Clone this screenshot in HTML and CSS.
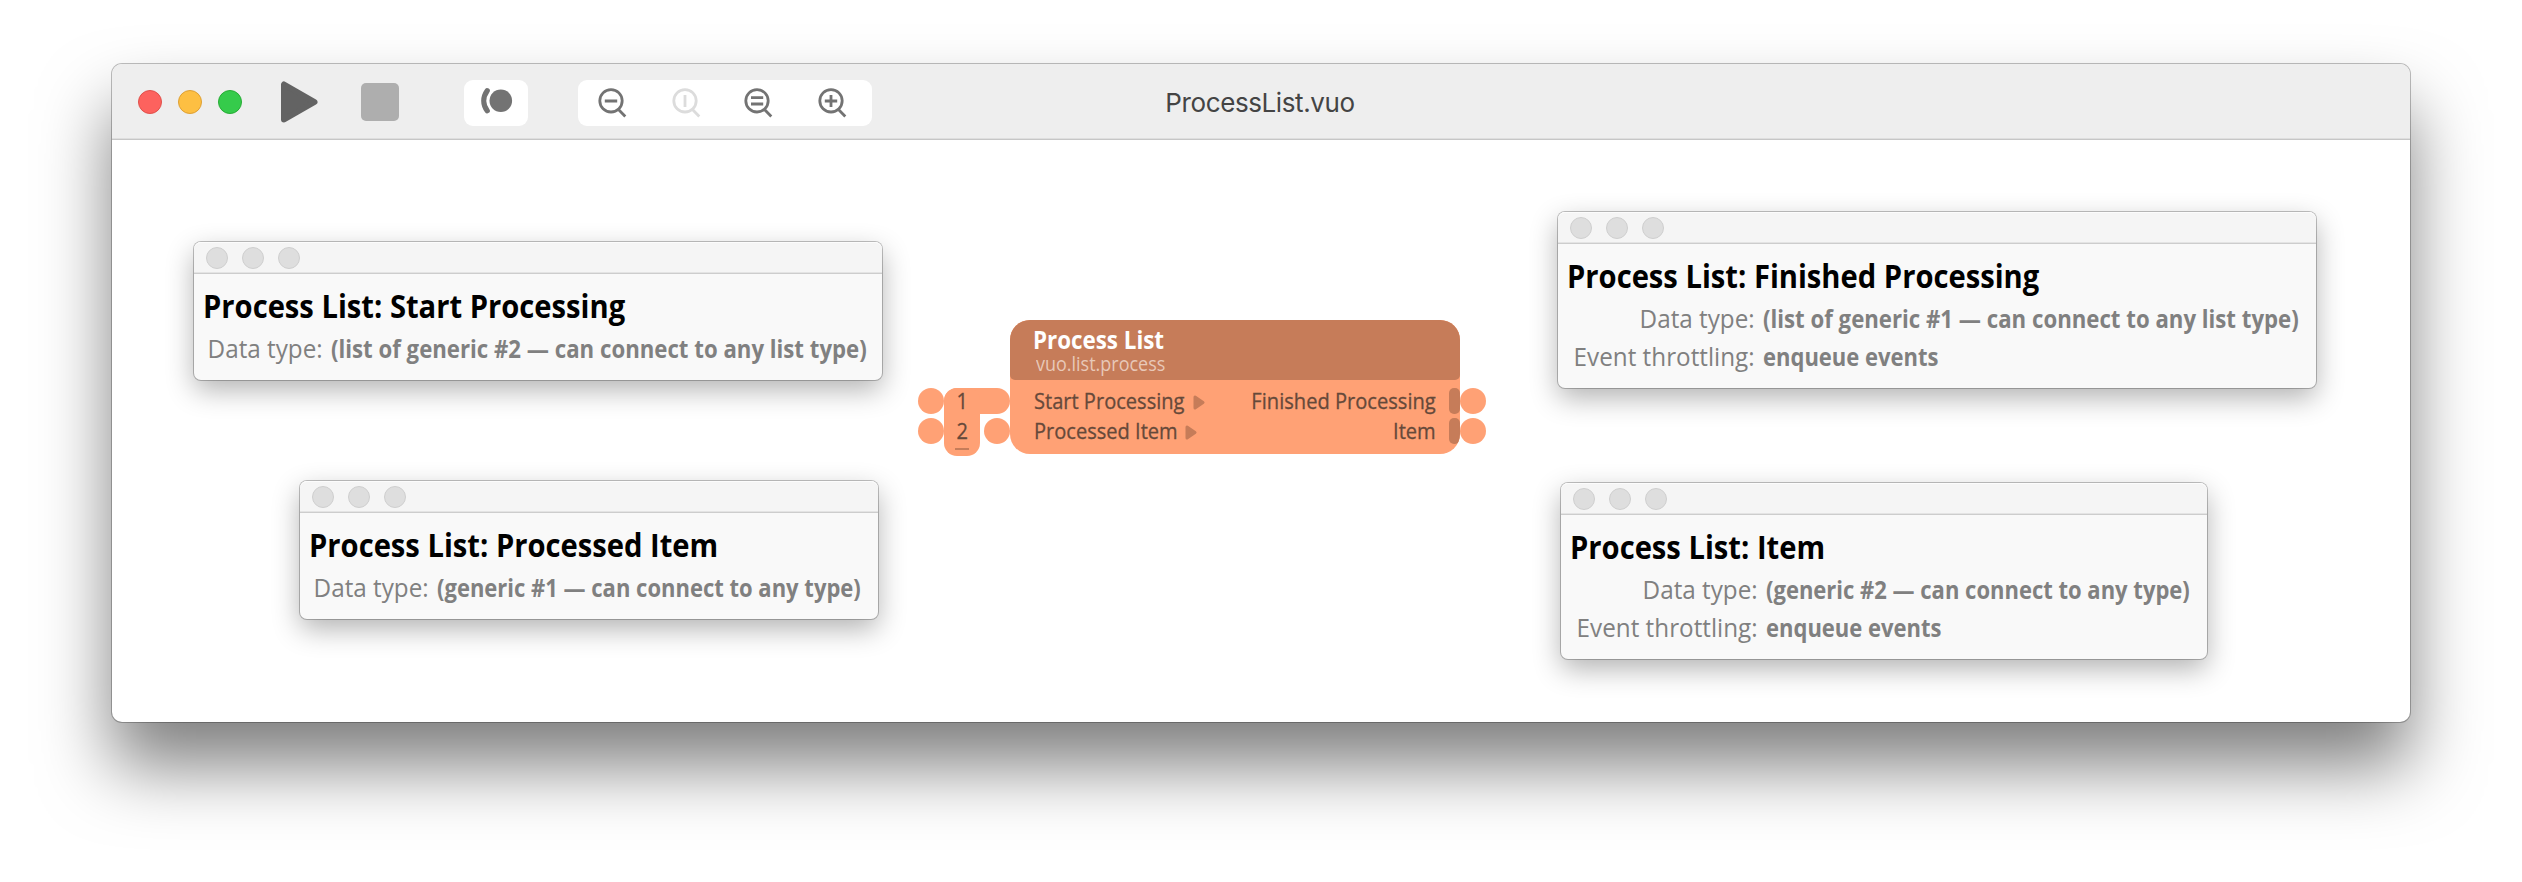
FILE: index.html
```
<!DOCTYPE html>
<html lang="en">
<head>
<meta charset="utf-8">
<title>ProcessList.vuo</title>
<link rel="stylesheet" href="styles.css">
</head>
<body>
<main class="window">
  <header class="toolbar">
    <div class="tools">
      <div class="lights"><i class="light red"></i><i class="light yellow"></i><i class="light green"></i></div>
      <svg class="play" width="38" height="44" viewBox="0 0 38 44"><path d="M4 4.500V39.500L34.500 22Z" fill="#636363" stroke="#636363" stroke-width="6" stroke-linejoin="round"/></svg>
      <i class="stop"></i>
      <div class="pill toggle">
        <svg width="64" height="46" viewBox="0 0 64 46"><circle cx="36.800" cy="20.700" r="11.300" fill="#737373"/><path d="M23.200 10.700C18.700 17 18.700 24.500 23.200 30.700" fill="none" stroke="#737373" stroke-width="5.300" stroke-linecap="round"/></svg>
      </div>
      <div class="pill zooms">
        <svg class="zoom" viewBox="0 0 46 46"><circle cx="23" cy="20.800" r="11.200"/><path d="M30.500 29.500L37.300 36.500M16.800 21H29.200"/></svg>
        <svg class="zoom dim" viewBox="0 0 46 46"><circle cx="23" cy="20.800" r="11.200"/><path d="M30.500 29.500L37.300 36.500M23 15V27"/></svg>
        <svg class="zoom near" viewBox="0 0 46 46"><circle cx="23" cy="20.800" r="11.200"/><path d="M30.500 29.500L37.300 36.500M17 17.700H29.200M17 24H29.200"/></svg>
        <svg class="zoom" viewBox="0 0 46 46"><circle cx="23" cy="20.800" r="11.200"/><path d="M30.500 29.500L37.300 36.500M16.800 21H29.200M23 15V27"/></svg>
      </div>
    </div>
    <h1 class="doc-title">ProcessList.vuo</h1>
  </header>

  <section class="canvas">
    <article class="panel p-start">
      <div class="panel-bar"><i></i><i></i><i></i></div>
      <h2>Process List: Start Processing</h2>
      <dl><dt>Data type:</dt><dd>(list of generic #2 — can connect to any list type)</dd></dl>
    </article>

    <article class="panel p-processed">
      <div class="panel-bar"><i></i><i></i><i></i></div>
      <h2>Process List: Processed Item</h2>
      <dl><dt>Data type:</dt><dd class="tight">(generic #1 — can connect to any type)</dd></dl>
    </article>

    <article class="panel p-finished">
      <div class="panel-bar"><i></i><i></i><i></i></div>
      <h2>Process List: Finished Processing</h2>
      <dl><dt>Data type:</dt><dd>(list of generic #1 — can connect to any list type)</dd>
      <dt>Event throttling:</dt><dd class="tight">enqueue events</dd></dl>
    </article>

    <article class="panel p-item">
      <div class="panel-bar"><i></i><i></i><i></i></div>
      <h2>Process List: Item</h2>
      <dl><dt>Data type:</dt><dd class="tight">(generic #2 — can connect to any type)</dd>
      <dt>Event throttling:</dt><dd class="tight">enqueue events</dd></dl>
    </article>

    <div class="inputs">
      <div class="ports"><i class="port"></i><i class="port"></i></div>
      <div class="list"><span>1</span><span>2</span><i class="grip"></i></div>
      <div class="links"><i class="arm"></i><i class="port"></i></div>
    </div>

    <article class="node">
      <header class="node-head"><h3>Process List</h3><p>vuo.list.process</p></header>
      <div class="row"><span class="in">Start Processing</span><svg class="tri" viewBox="0 0 12 15"><path d="M2 2V13L10 7.500Z"/></svg><span class="out">Finished Processing</span><i class="tab"></i></div>
      <div class="row"><span class="in">Processed Item</span><svg class="tri" viewBox="0 0 12 15"><path d="M2 2V13L10 7.500Z"/></svg><span class="out">Item</span><i class="tab"></i></div>
    </article>
    <div class="ports outputs"><i class="port"></i><i class="port"></i></div>
  </section>
</main>
</body>
</html>
```
FILE: styles.css
```
* { box-sizing: border-box; margin: 0; padding: 0; }
body { background: #fff; height: 882px; overflow: hidden; padding: 64px 112px 0; font-family: "Open Sans", "Noto Sans", sans-serif; }
svg { display: block; flex: none; }

.window { width: 2298px; height: 658px; border-radius: 10px; background: #fff;
  box-shadow: 0 0 0 1px rgba(0,0,0,.25), 0 44px 70px rgba(0,0,0,.5); }

.toolbar { height: 76px; display: grid; grid-template-columns: 1fr auto 1fr; align-items: center;
  background: #eee; border-bottom: 1px solid #c6c6c6; box-shadow: inset 0 -1px #dedede; border-radius: 10px 10px 0 0; }
.tools { display: flex; align-items: center; padding-left: 26px; }
.lights { display: flex; gap: 16px; }
.light { width: 24px; height: 24px; border-radius: 50%; border: 1px solid; }
.red { background: #fd625e; border-color: #e0504b; }
.yellow { background: #fdbf42; border-color: #dea034; }
.green { background: #35cb4b; border-color: #27ac35; }
.play { margin: 1px 0 0 38px; }
.stop { width: 38px; height: 38px; margin: 1px 0 0 43px; border-radius: 5px; background: #aeaeae; }
.pill { height: 46px; margin-top: 2px; border-radius: 9px; background: #fff; }
.toggle { width: 64px; margin-left: 65px; }
.zooms { width: 294px; margin-left: 50px; padding-left: 9.5px; display: flex; gap: 28px; }
.zoom { width: 46px; height: 46px; fill: none; stroke: #737373; stroke-width: 2.8; }
.dim { stroke: #dcdcdc; }
.near { margin-left: -2px; }
.doc-title { margin: 1px 2px 0 0; font: 400 26px Inter, Roboto, sans-serif; letter-spacing: -.4px; color: #444; }

.canvas { position: relative; height: 582px; }

.panel { position: absolute; border-radius: 7px; background: #f9f9f9;
  box-shadow: 0 0 0 1px rgba(0,0,0,.24), 0 10px 28px rgba(0,0,0,.3); }
.p-start { left: 82px; top: 102px; width: 688px; height: 138px; }
.p-processed { left: 188px; top: 341px; width: 578px; height: 138px; }
.p-finished { left: 1446px; top: 72px; width: 758px; height: 176px; }
.p-item { left: 1449px; top: 343px; width: 646px; height: 176px; }
.panel-bar { height: 32px; padding: 5px 12px; display: flex; gap: 14px; background: #f5f5f5;
  border-bottom: 1px solid #cdcdcd; box-shadow: inset 0 1px #fcfcfc, inset 0 -1px #e4e4e4; border-radius: 7px 7px 0 0; }
.panel-bar i { width: 22px; height: 22px; border-radius: 50%; background: #dedede; border: 1px solid #cfcfcf; }
.panel h2 { width: max-content; margin: 12px 0 0 9px; font-size: 33px; line-height: 40px; font-weight: 700;
  color: #000; white-space: nowrap; transform: scaleX(.884); transform-origin: left; }
.panel dl { margin-top: 3px; padding-left: 10px; display: grid; grid-template-columns: max-content max-content; column-gap: 8.5px;
  font-size: 25px; line-height: 38px; color: #808080; white-space: nowrap; }
.panel dt { justify-self: end; transform: scaleX(.97); transform-origin: right; }
.panel dd { justify-self: start; font-weight: 700; transform: scaleX(.888); transform-origin: left; }
.panel .tight { transform: scaleX(.88); }

.port { display: block; width: 26px; height: 26px; border-radius: 50%; background: #ffa175; }
.ports { display: flex; flex-direction: column; gap: 4px; }
.inputs { position: absolute; left: 806px; top: 248px; display: flex; font-size: 22px; color: #66493a; -webkit-text-stroke: .3px #66493a; }
.list { width: 36px; height: 68px; margin-right: -36px; background: #ffa175; border-radius: 13px;
  display: flex; flex-direction: column; align-items: center; position: relative; z-index: 1; }
.list span { height: 30px; line-height: 25px; transform: scaleX(.91); }
.grip { width: 14px; height: 2px; background: #c67c59; }
.links { display: flex; flex-direction: column; align-items: flex-end; gap: 4px; }
.arm { width: 66px; height: 26px; border-radius: 13px; background: #ffa175; }
.outputs { position: absolute; left: 1348px; top: 248px; }

.node { position: absolute; left: 898px; top: 180px; width: 450px; height: 134px; border-radius: 20px;
  background: #ffa175; overflow: hidden; white-space: nowrap; }
.node-head { height: 60px; padding: 5px 0 0 23px; margin-bottom: 6px; background: #c67c59; border-radius: 0 0 5px 5px; }
.node-head h3 { width: max-content; font-size: 25.5px; line-height: 29px; font-weight: 700; color: #fff; transform: scaleX(.877); transform-origin: left; }
.node-head p { width: max-content; margin-left: 2.5px; font-size: 19.5px; line-height: 19px; color: #e8c8b8; transform: scaleX(.922); transform-origin: left; }
.row { height: 30px; position: relative; display: flex; align-items: center; padding: 0 24px 0 23.5px;
  font-size: 22px; line-height: 29px; color: #66493a; -webkit-text-stroke: .3px #66493a; }
.in, .out { margin-bottom: 1px; }
.in { transform: scaleX(.912); transform-origin: left; }
.tri { width: 12px; height: 15px; margin: 2px 0 0 -6px; fill: #c67c59; stroke: #c67c59; stroke-width: 3; stroke-linejoin: round; }
.out { margin-left: auto; transform: scaleX(.914); transform-origin: right; }
.tab { position: absolute; right: 0; top: 2px; width: 11px; height: 26px; border-radius: 5px; background: #c67c59; }
```
